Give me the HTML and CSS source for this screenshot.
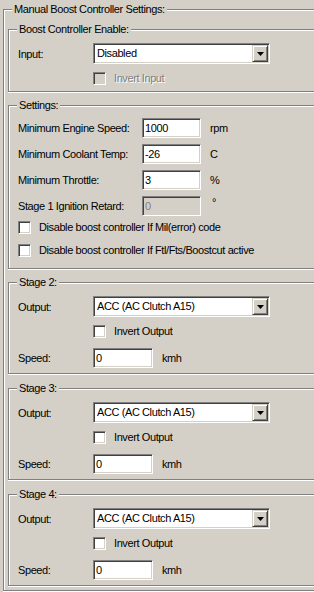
FILE: index.html
```html
<!DOCTYPE html>
<html lang="en">
<head>
  <meta charset="UTF-8">
  <meta name="viewport" content="width=device-width, initial-scale=1.0">
  <title>Manual Boost Controller</title>
  <link rel="stylesheet" href="styles.css">
</head>
<body>
  <div class="panel">
    <fieldset class="group outer">
      <legend>Manual Boost Controller Settings:</legend>
      <div class="outer-body">

        <fieldset class="group enable">
          <legend>Boost Controller Enable:</legend>
          <div class="group-body">
            <div class="row">
              <span class="label short">Input:</span>
              <div class="combo">
                <span class="combo-text">Disabled</span>
                <span class="combo-btn"><svg width="7" height="4" viewBox="0 0 7 4"><path d="M0 0h7L3.5 4z" fill="#000"/></svg></span>
              </div>
            </div>
            <label class="check-row indent disabled">
              <input type="checkbox" disabled>
              <span>Invert Input</span>
            </label>
          </div>
        </fieldset>

        <fieldset class="group settings">
          <legend>Settings:</legend>
          <div class="group-body">
            <div class="row field">
              <span class="label long">Minimum Engine Speed:</span>
              <input class="text" type="text" value="1000">
              <span class="unit">rpm</span>
            </div>
            <div class="row field">
              <span class="label long">Minimum Coolant Temp:</span>
              <input class="text" type="text" value="-26">
              <span class="unit">C</span>
            </div>
            <div class="row field">
              <span class="label long">Minimum Throttle:</span>
              <input class="text" type="text" value="3">
              <span class="unit">%</span>
            </div>
            <div class="row field">
              <span class="label long">Stage 1 Ignition Retard:</span>
              <input class="text" type="text" value="0" disabled>
              <span class="unit deg">°</span>
            </div>
            <label class="check-row first">
              <input type="checkbox">
              <span>Disable boost controller If Mil(error) code</span>
            </label>
            <label class="check-row second">
              <input type="checkbox">
              <span>Disable boost controller If Ftl/Fts/Boostcut active</span>
            </label>
          </div>
        </fieldset>

        <fieldset class="group stage">
          <legend>Stage 2:</legend>
          <div class="group-body">
            <div class="row">
              <span class="label short">Output:</span>
              <div class="combo">
                <span class="combo-text">ACC (AC Clutch A15)</span>
                <span class="combo-btn"><svg width="7" height="4" viewBox="0 0 7 4"><path d="M0 0h7L3.5 4z" fill="#000"/></svg></span>
              </div>
            </div>
            <label class="check-row indent">
              <input type="checkbox">
              <span>Invert Output</span>
            </label>
            <div class="row speed">
              <span class="label short">Speed:</span>
              <input class="text wide" type="text" value="0">
              <span class="unit">kmh</span>
            </div>
          </div>
        </fieldset>

        <fieldset class="group stage">
          <legend>Stage 3:</legend>
          <div class="group-body">
            <div class="row">
              <span class="label short">Output:</span>
              <div class="combo">
                <span class="combo-text">ACC (AC Clutch A15)</span>
                <span class="combo-btn"><svg width="7" height="4" viewBox="0 0 7 4"><path d="M0 0h7L3.5 4z" fill="#000"/></svg></span>
              </div>
            </div>
            <label class="check-row indent">
              <input type="checkbox">
              <span>Invert Output</span>
            </label>
            <div class="row speed">
              <span class="label short">Speed:</span>
              <input class="text wide" type="text" value="0">
              <span class="unit">kmh</span>
            </div>
          </div>
        </fieldset>

        <fieldset class="group stage">
          <legend>Stage 4:</legend>
          <div class="group-body">
            <div class="row">
              <span class="label short">Output:</span>
              <div class="combo">
                <span class="combo-text">ACC (AC Clutch A15)</span>
                <span class="combo-btn"><svg width="7" height="4" viewBox="0 0 7 4"><path d="M0 0h7L3.5 4z" fill="#000"/></svg></span>
              </div>
            </div>
            <label class="check-row indent">
              <input type="checkbox">
              <span>Invert Output</span>
            </label>
            <div class="row speed">
              <span class="label short">Speed:</span>
              <input class="text wide" type="text" value="0">
              <span class="unit">kmh</span>
            </div>
          </div>
        </fieldset>

      </div>
    </fieldset>
  </div>
</body>
</html>
```

FILE: styles.css
```css
* {
  margin: 0;
  padding: 0;
  box-sizing: border-box;
}

body, html {
  width: 100%;
  height: 100%;
  overflow: hidden;
  background-color: #d4d0c8;
  font-family: "Liberation Sans", Arial, sans-serif;
  font-size: 11px;
  letter-spacing: -0.4px;
  color: #000;
}

.panel {
  padding: 3px 0 0 3px;
  width: 314px;
}

/* etched group box, cut off on the right */
.group {
  border: 1px solid #808080;
  border-right: none;
  box-shadow: inset 1px 1px #fff, 0 1px #fff;
  min-width: 0;
}

.group legend {
  margin-left: 8px;
  padding: 0 2px;
  line-height: 13px;
  background-color: #d4d0c8;
  position: relative;
}

.outer-body {
  padding: 7px 0 4px 4px;
}

.group-body {
  padding: 7px 0 5px 9px;
}

.settings {
  margin-top: 7px;
}

.settings .group-body {
  padding: 6px 0 10px 9px;
}

.stage {
  margin-top: 8px;
}

.settings + .stage {
  margin-top: 7px;
}

.row {
  display: flex;
  align-items: center;
}

.field + .field {
  margin-top: 6px;
}

.label.short {
  width: 75px;
}

.label.long {
  width: 124px;
}

.unit {
  margin-left: 9px;
}

.unit.deg {
  align-self: flex-start;
  margin-left: 11px;
}

/* combobox */
.combo {
  display: flex;
  width: 177px;
  height: 21px;
  padding: 1px;
  background-color: #fff;
  border: 1px solid;
  border-color: #808080 #fff #fff #808080;
  box-shadow: inset 1px 1px #404040, inset -1px -1px #d4d0c8;
}

.combo-text {
  flex: 1;
  padding-left: 2px;
  line-height: 17px;
}

.combo-btn {
  width: 16px;
  height: 17px;
  display: flex;
  align-items: center;
  justify-content: center;
  background-color: #d4d0c8;
  border: 1px solid;
  border-color: #d4d0c8 #404040 #404040 #d4d0c8;
  box-shadow: inset 1px 1px #fff, inset -1px -1px #808080;
}

.combo-btn svg {
  display: block;
}

/* text box */
.text {
  width: 59px;
  height: 20px;
  padding: 0 2px;
  font-family: inherit;
  font-size: 11px;
  letter-spacing: inherit;
  color: #000;
  background-color: #fff;
  border: 1px solid;
  border-color: #808080 #fff #fff #808080;
  box-shadow: inset 1px 1px #404040, inset -1px -1px #d4d0c8;
  outline: none;
}

.text.wide {
  width: 60px;
}

.text:disabled {
  background-color: #d4d0c8;
  color: #808080;
}

/* checkbox */
.check-row {
  display: flex;
  align-items: center;
  height: 16px;
  margin-top: 6px;
}

.check-row.indent {
  padding-left: 75px;
}

.check-row.first {
  margin-top: 3px;
}

.check-row.second {
  margin-top: 7px;
}

.check-row input {
  appearance: none;
  width: 13px;
  height: 13px;
  margin-right: 8px;
  background-color: #fff;
  border: 1px solid;
  border-color: #808080 #fff #fff #808080;
  box-shadow: inset 1px 1px #404040, inset -1px -1px #d4d0c8;
}

.check-row.disabled input {
  background-color: #d4d0c8;
}

.check-row.disabled span {
  color: #808080;
  text-shadow: 1px 1px #fff;
}

.speed {
  margin-top: 9px;
}
```
